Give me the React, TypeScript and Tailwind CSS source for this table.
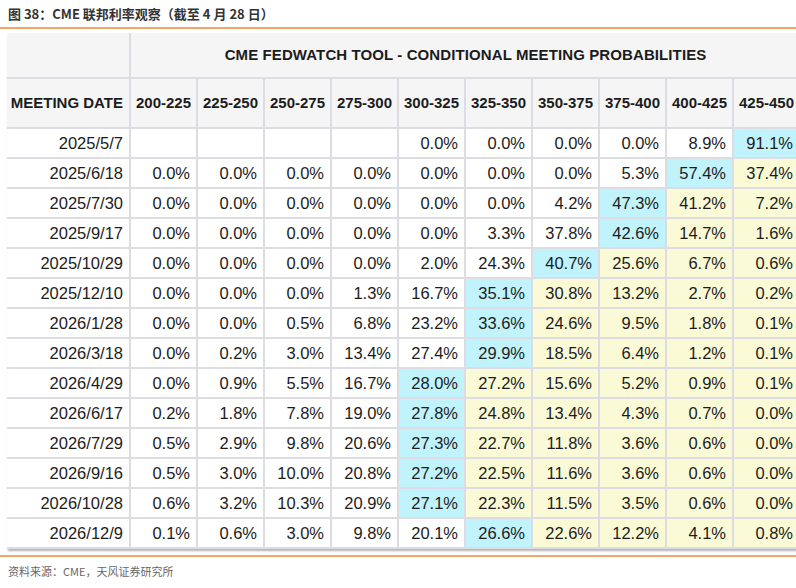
import React from "react";

const RANGES = [
  "200-225",
  "225-250",
  "250-275",
  "275-300",
  "300-325",
  "325-350",
  "350-375",
  "375-400",
  "400-425",
  "425-450",
];

// null = blank cell
const ROWS: [string, (number | null)[]][] = [
  ["2025/5/7", [null, null, null, null, 0.0, 0.0, 0.0, 0.0, 8.9, 91.1]],
  ["2025/6/18", [0.0, 0.0, 0.0, 0.0, 0.0, 0.0, 0.0, 5.3, 57.4, 37.4]],
  ["2025/7/30", [0.0, 0.0, 0.0, 0.0, 0.0, 0.0, 4.2, 47.3, 41.2, 7.2]],
  ["2025/9/17", [0.0, 0.0, 0.0, 0.0, 0.0, 3.3, 37.8, 42.6, 14.7, 1.6]],
  ["2025/10/29", [0.0, 0.0, 0.0, 0.0, 2.0, 24.3, 40.7, 25.6, 6.7, 0.6]],
  ["2025/12/10", [0.0, 0.0, 0.0, 1.3, 16.7, 35.1, 30.8, 13.2, 2.7, 0.2]],
  ["2026/1/28", [0.0, 0.0, 0.5, 6.8, 23.2, 33.6, 24.6, 9.5, 1.8, 0.1]],
  ["2026/3/18", [0.0, 0.2, 3.0, 13.4, 27.4, 29.9, 18.5, 6.4, 1.2, 0.1]],
  ["2026/4/29", [0.0, 0.9, 5.5, 16.7, 28.0, 27.2, 15.6, 5.2, 0.9, 0.1]],
  ["2026/6/17", [0.2, 1.8, 7.8, 19.0, 27.8, 24.8, 13.4, 4.3, 0.7, 0.0]],
  ["2026/7/29", [0.5, 2.9, 9.8, 20.6, 27.3, 22.7, 11.8, 3.6, 0.6, 0.0]],
  ["2026/9/16", [0.5, 3.0, 10.0, 20.8, 27.2, 22.5, 11.6, 3.6, 0.6, 0.0]],
  ["2026/10/28", [0.6, 3.2, 10.3, 20.9, 27.1, 22.3, 11.5, 3.5, 0.6, 0.0]],
  ["2026/12/9", [0.1, 0.6, 3.0, 9.8, 20.1, 26.6, 22.6, 12.2, 4.1, 0.8]],
];

function cellTone(values: (number | null)[], i: number) {
  let max = 0;
  values.forEach((v, j) => {
    if (v !== null && v > (values[max] ?? -1)) max = j;
  });
  if (i === max) return "bg-[#c0f3fb]";
  if (i > max) return "bg-[#fafad6]";
  return "bg-white";
}

export default function App() {
  return (
    <div className="h-[588px] w-[796px] overflow-hidden bg-white font-['Liberation_Sans',Arial,sans-serif] text-[#1c1c1c]">
      <div className="flex h-[27px] items-center pl-[8px] font-['Noto_Sans_CJK_SC',sans-serif] text-[13px] font-bold text-[#333]">
        图 38：CME 联邦利率观察（截至 4 月 28 日）
      </div>
      <div className="h-[2px] bg-[#f2a566]" />

      <div className="ml-[7px] mt-[4px] w-[793px] shadow-[0_3px_2px_-1px_rgba(0,0,0,0.3)]">
        <table className="w-[793px] table-fixed border-collapse">
          <colgroup>
            <col className="w-[123px]" />
            {RANGES.map((r) => (
              <col key={r} className="w-[67px]" />
            ))}
          </colgroup>
          <thead className="bg-[#f5f5f5]">
            <tr className="h-[45px] border-b-2 border-[#dcdce2]">
              <th className="border-r-2 border-[#dcdce2]" />
              <th
                colSpan={10}
                className="text-center text-[15px] font-bold tracking-[0.1px]"
              >
                CME FEDWATCH TOOL - CONDITIONAL MEETING PROBABILITIES
              </th>
            </tr>
            <tr className="h-[50px] border-b-2 border-[#dcdce2]">
              <th className="border-r-2 border-[#dcdce2] pr-[6px] text-right text-[15px] font-bold">
                MEETING DATE
              </th>
              {RANGES.map((r) => (
                <th
                  key={r}
                  className="border-r-2 border-[#dcdce2] text-center text-[15px] font-bold"
                >
                  {r}
                </th>
              ))}
            </tr>
          </thead>
          <tbody>
            {ROWS.map(([date, values]) => (
              <tr key={date} className="h-[30px] border-b-2 border-[#dcdce2]">
                <td className="border-r-2 border-[#dcdce2] bg-white pr-[6px] text-right text-[16.5px]">
                  {date}
                </td>
                {values.map((v, i) => (
                  <td
                    key={i}
                    className={`border-r-2 border-[#dcdce2] pr-[6px] text-right text-[16.5px] ${
                      v === null ? "bg-white" : cellTone(values, i)
                    }`}
                  >
                    {v === null ? "" : `${v.toFixed(1)}%`}
                  </td>
                ))}
              </tr>
            ))}
          </tbody>
        </table>
      </div>

      <div className="mt-[6px] h-[2px] bg-[#f2a566]" />
      <div className="pl-[8px] pt-[6px] font-['Noto_Sans_CJK_SC',sans-serif] text-[11px] text-[#666]">
        资料来源：CME，天风证券研究所
      </div>
    </div>
  );
}
